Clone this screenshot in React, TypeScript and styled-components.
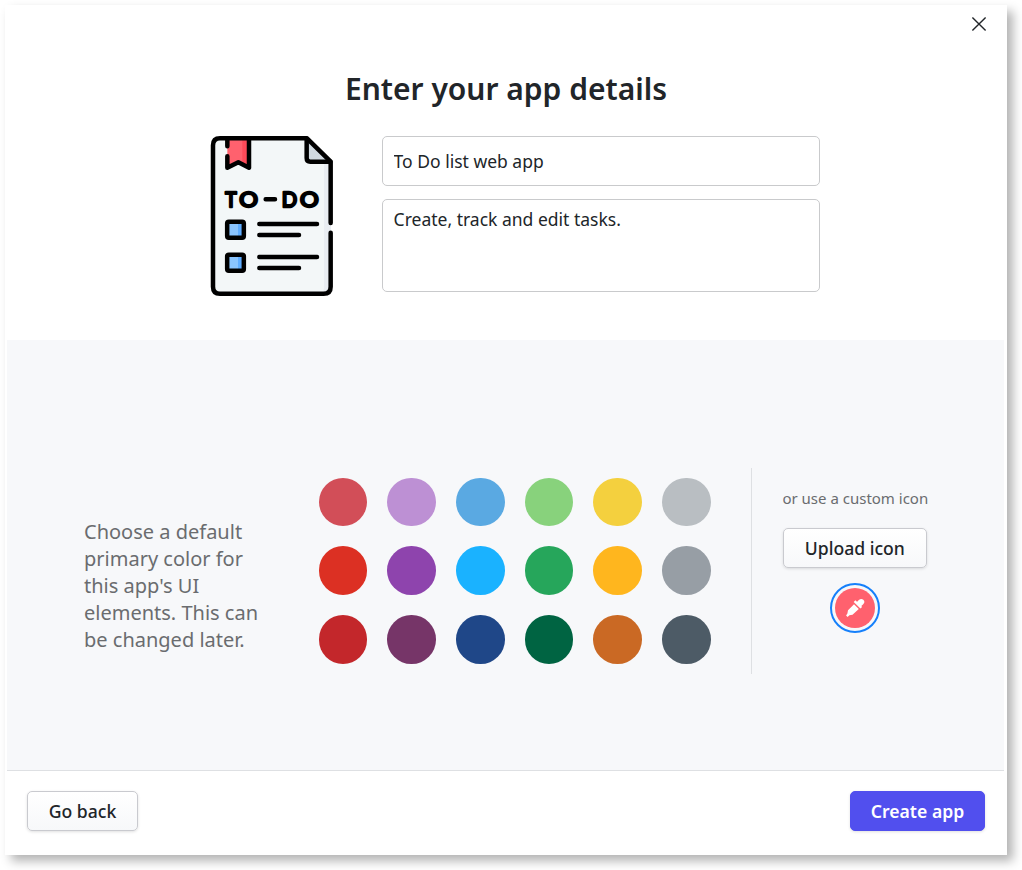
import React, { useState } from "react";
import styled, { createGlobalStyle, css } from "styled-components";

const GlobalStyle = createGlobalStyle`
  *, *::before, *::after { box-sizing: border-box; }
  html, body { margin: 0; padding: 0; background: #fff; }
  body, button, input, textarea {
    font-family: "Noto Sans", "Open Sans", sans-serif;
    color: #212529;
  }
`;

const Page = styled.main`
  width: 1022px;
  height: 870px;
  padding: 5px 15px 15px 5px;
  overflow: hidden;
`;

const Dialog = styled.section`
  display: flex;
  flex-direction: column;
  width: 1002px;
  height: 850px;
  padding: 0 3px 0 2px;
  background: #fff;
  box-shadow: 6px 6px 10px rgba(0, 0, 0, 0.3);
`;

const Header = styled.header`
  display: flex;
  justify-content: flex-end;
  height: 57px;
  padding: 11px 17px 0 0;
`;

const CloseButton = styled.button`
  width: 16px;
  height: 16px;
  padding: 0;
  border: 0;
  background: none;
  svg { display: block; }
`;

const Details = styled.div`
  display: flex;
  flex-direction: column;
  align-items: center;
  height: 278px;
`;

const Title = styled.h1`
  margin: 0 0 0 1px;
  height: 54px;
  line-height: 54px;
  font-size: 30px;
  font-weight: 600;
  white-space: nowrap;
`;

const DetailsRow = styled.div`
  display: flex;
  width: 100%;
  padding: 20px 0 0 203px;
  gap: 48px;
`;

const AppIcon = styled.svg`
  display: block;
  width: 124px;
  height: 160px;
`;

const Fields = styled.div`
  display: flex;
  flex-direction: column;
  gap: 13px;
  width: 438px;
`;

const field = css`
  display: block;
  width: 100%;
  border: 1px solid #c9cacc;
  border-radius: 5px;
  background: #fff;
  font-size: 17.5px;
  outline: none;
`;

const NameInput = styled.input`
  ${field}
  height: 50px;
  padding: 0 10.6px 1px;
`;

const DescriptionInput = styled.textarea`
  ${field}
  height: 93px;
  padding: 7px 10.6px;
  line-height: 25px;
  resize: none;
`;

const Appearance = styled.div`
  display: flex;
  align-items: flex-start;
  height: 431px;
  padding: 128px 0 0 77px;
  background: #f7f8fa;
  border-bottom: 1px solid #dee0e3;
`;

const Hint = styled.p`
  width: 180px;
  margin: 50px 54.8px 0 0;
  font-size: 20px;
  line-height: 27px;
  color: #6a6c6f;
`;

const Palette = styled.div`
  display: grid;
  grid-template-columns: repeat(6, 48.67px);
  grid-auto-rows: 48.67px;
  gap: 20px;
  padding-top: 9.7px;
  margin-right: 40.2px;
`;

const Swatch = styled.button<{ $color: string }>`
  padding: 0;
  border: 0;
  border-radius: 50%;
  background: ${({ $color }) => $color};
`;

const Custom = styled.div`
  display: flex;
  flex-direction: column;
  align-items: center;
  height: 206px;
  padding: 20px 0 0 30.5px;
  border-left: 1px solid #dee0e3;
`;

const CustomLabel = styled.span`
  height: 20px;
  line-height: 20px;
  font-size: 15px;
  color: #6a6c6f;
  white-space: nowrap;
`;

const Button = styled.button<{ $primary?: boolean; $width: number }>`
  width: ${({ $width }) => $width}px;
  height: 40px;
  padding: 0 0 1px;
  border: 1px solid #c9cacf;
  border-radius: 5px;
  background: linear-gradient(#fff, #f7f8fa);
  box-shadow: 0 1px 3px rgba(0, 0, 0, 0.12);
  font-size: 17.6px;
  font-weight: 550;
  white-space: nowrap;
  ${({ $primary }) =>
    $primary &&
    css`
      border-color: #514fee;
      background: #514fee;
      color: #fff;
      font-weight: 600;
    `}
`;

const UploadButton = styled(Button)`
  margin: 20px 1px 15px 0;
`;

const PickerButton = styled.button`
  display: flex;
  align-items: center;
  justify-content: center;
  width: 50px;
  height: 50px;
  margin-right: 1px;
  padding: 3px;
  border: 2px solid #1680fb;
  border-radius: 50%;
  background-color: #f7f8fa;
`;

const PickerColor = styled.span`
  display: flex;
  flex: none;
  align-items: center;
  justify-content: center;
  width: 40px;
  height: 40px;
  border-radius: 50%;
  background: #ff616e;
`;

const Footer = styled.footer`
  display: flex;
  justify-content: space-between;
  padding: 20px 19px 0 20px;
`;

const swatches = [
  "#d24e58", "#bd90d4", "#5aa9e2", "#88d27c", "#f4d03e", "#b9bec2",
  "#dc3023", "#8e44ad", "#1ab2ff", "#26a65b", "#ffb61e", "#979ea5",
  "#c3272b", "#763568", "#1f4788", "#006442", "#ca6924", "#4d5b66",
];

function TodoIcon() {
  return (
    <AppIcon viewBox="30 30 372 480" aria-label="To-do list">
      <path d="M54 36H322L393 107V486Q393 503 376 503H56Q39 503 39 486V52Q39 36 54 36Z" fill="#f3f7f8" />
      <path d="M372 106H393V486Q393 503 376 503H358Q372 500 372 486Z" fill="#e9edf2" />
      <path d="M320 40V96Q320 107 331 107H391Z" fill="#d1dae1" />
      <path d="M82 38H147V124L115 108L82 124Z" fill="#ff616e" />
      <path d="M127 38H147V124L127 114Z" fill="#ff4a59" />
      <rect x="83" y="288" width="48" height="47" fill="#8ac5ff" />
      <rect x="114" y="288" width="17" height="47" fill="#5fadff" />
      <rect x="83" y="387" width="48" height="47" fill="#8ac5ff" />
      <rect x="114" y="387" width="17" height="47" fill="#5fadff" />
      <g fill="none" stroke="#000" strokeWidth="13.5" strokeLinecap="round" strokeLinejoin="round">
        <path d="M392 291V107L321 37H60Q39 37 39 58V482Q39 503 60 503H371Q392 503 392 482V320" />
        <path d="M320 38V96Q320 107 331 107H391" />
        <path d="M82 40V61M82 91V125L115 109L147 125V40" />
        <rect x="81.500" y="287" width="50" height="48" rx="5" />
        <rect x="81.500" y="386" width="50" height="48" rx="5" />
        <path d="M178 294H351M178 327H297M178 393H351M178 426H297M197 220H225" />
      </g>
      <g
        fill="#000"
        stroke="#000"
        strokeWidth="7.5"
        strokeLinejoin="round"
        fontFamily="Lato, sans-serif"
        fontWeight="400"
        fontSize="66"
      >
        <text x="76" y="243" textLength="34" lengthAdjust="spacingAndGlyphs">T</text>
        <text x="118" y="243" textLength="56" lengthAdjust="spacingAndGlyphs">O</text>
        <text x="245" y="243" textLength="46" lengthAdjust="spacingAndGlyphs">D</text>
        <text x="300" y="243" textLength="56" lengthAdjust="spacingAndGlyphs">O</text>
      </g>
    </AppIcon>
  );
}

export default function App() {
  const [name, setName] = useState("To Do list web app");
  const [description, setDescription] = useState("Create, track and edit tasks.");

  return (
    <Page>
      <GlobalStyle />
      <Dialog role="dialog">
        <Header>
          <CloseButton aria-label="Close">
            <svg width="16" height="16" viewBox="0 0 16 16">
              <path d="M1.4 1.4L14.6 14.6M14.6 1.4L1.4 14.6" stroke="#212529" strokeWidth="1.4" />
            </svg>
          </CloseButton>
        </Header>
        <Details>
          <Title>Enter your app details</Title>
          <DetailsRow>
            <TodoIcon />
            <Fields>
              <NameInput value={name} onChange={(e) => setName(e.target.value)} />
              <DescriptionInput
                value={description}
                spellCheck={false}
                onChange={(e) => setDescription(e.target.value)}
              />
            </Fields>
          </DetailsRow>
        </Details>
        <Appearance>
          <Hint>Choose a default primary color for this app's UI elements. This can be changed later.</Hint>
          <Palette>
            {swatches.map((color) => (
              <Swatch key={color} $color={color} aria-label={color} />
            ))}
          </Palette>
          <Custom>
            <CustomLabel>or use a custom icon</CustomLabel>
            <UploadButton $width={144}>Upload icon</UploadButton>
            <PickerButton aria-label="Pick a color">
              <PickerColor>
                <svg width="20" height="20" viewBox="0 0 20 20" fill="#fff">
                  <path d="M12.600 3.400C13.800 1 16.500 .2 18.300 1.700S19.600 5.800 16.900 7.400l-.6 .6 .8 .9-1.700 1.700-6.700-6.700 1.700-1.700 1.200 1.200Z" />
                  <path d="M9 6.200 13.800 11 7.500 16.800 4.400 17.300 2.600 18.900 1.100 17.500 2.400 15.500 3 12.300Z" />
                </svg>
              </PickerColor>
            </PickerButton>
          </Custom>
        </Appearance>
        <Footer>
          <Button $width={111}>Go back</Button>
          <Button $primary $width={135}>Create app</Button>
        </Footer>
      </Dialog>
    </Page>
  );
}
